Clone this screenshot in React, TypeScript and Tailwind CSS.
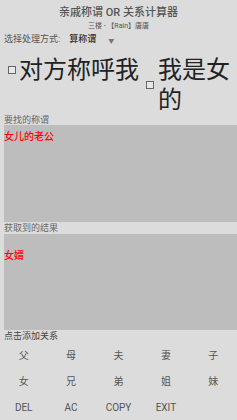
import React from 'react';

const keys = [
  ['父', '母', '夫', '妻', '子'],
  ['女', '兄', '弟', '姐', '妹'],
  ['DEL', 'AC', 'COPY', 'EXIT', ''],
];

const Box = () => (
  <span className="inline-block w-[8px] h-[8px] border border-[#666] bg-[#e8e8e8] shrink-0" />
);

export default function App() {
  return (
    <div className="w-[237px] h-[420px] bg-[#dcdcdc] overflow-hidden flex flex-col font-['Roboto','Noto_Sans_CJK_SC',sans-serif] text-[#555]">
      {/* header */}
      <div className="flex flex-col items-center pt-[6px]">
        <div className="text-[11px] leading-[14px] font-medium">亲戚称谓 OR 关系计算器</div>
        <div className="text-[7px] leading-[8px] mt-[2px]">三楼 - 【Rain】唐唐</div>
      </div>

      {/* mode select */}
      <div className="flex items-center h-[16px] mt-[2px] pl-[4px] text-[9px]">
        <span>选择处理方式:</span>
        <span className="ml-[9px] text-[#333] font-medium">算称谓</span>
        <span className="ml-[12px] text-[6px] text-[#777]">▼</span>
      </div>

      {/* checkboxes */}
      <div className="flex items-start h-[60px] mt-[7px] text-[24px] leading-[30px] text-[#222]">
        <div className="flex items-center pl-[8px] gap-[3px]">
          <Box />
          <span>对方称呼我</span>
        </div>
        <div className="flex items-center pl-[7px] gap-[4px]">
          <Box />
          <span className="w-[74px] break-all">我是女的</span>
        </div>
      </div>

      {/* input */}
      <div className="pl-[4px] text-[9px] leading-[10px] h-[10px] text-[#666]">要找的称谓</div>
      <div className="ml-[4px] h-[97px] bg-[#bdbdbd] pt-[6px] text-[10px] leading-[12px] text-[#f00] font-medium">女儿的老公</div>

      {/* result */}
      <div className="pl-[4px] text-[9px] leading-[12px] h-[12px] text-[#666]">获取到的结果</div>
      <div className="ml-[4px] h-[96px] bg-[#bdbdbd] pt-[16px] text-[10px] leading-[12px] text-[#f00] font-medium">女婿</div>

      {/* keypad */}
      <div className="pl-[4px] text-[9px] leading-[12px] h-[12px] text-[#444]">点击添加关系</div>
      <div className="flex flex-col">
        {keys.map((row, i) => (
          <div key={i} className="grid grid-cols-5 h-[26px]">
            {row.map((k, j) => (
              <div key={j} className="flex items-center justify-center text-[10px] text-[#555]">
                {k}
              </div>
            ))}
          </div>
        ))}
      </div>
    </div>
  );
}
